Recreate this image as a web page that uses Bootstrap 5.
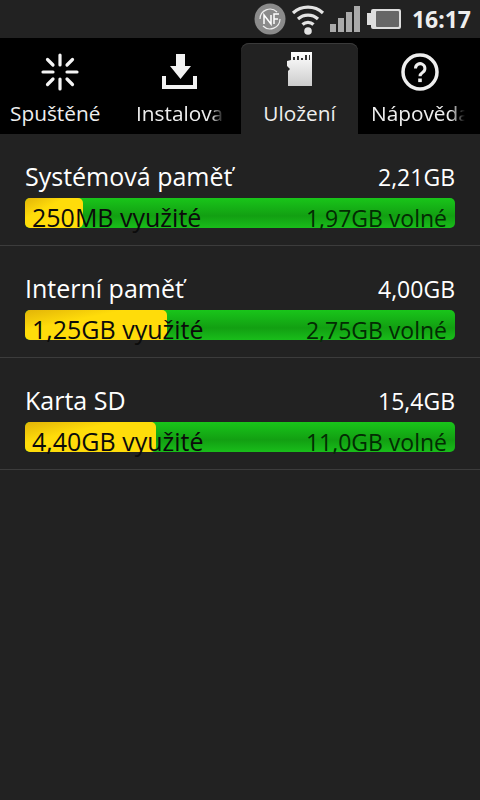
<!DOCTYPE html>
<html lang="cs">
<head>
    <meta charset="UTF-8">
    <meta name="viewport" content="width=device-width, initial-scale=1">
    <title>Úložiště</title>
    <link href="https://cdn.jsdelivr.net/npm/bootstrap@5.3.0/dist/css/bootstrap.min.css" rel="stylesheet">
    <script src="https://cdn.jsdelivr.net/npm/bootstrap@5.3.0/dist/js/bootstrap.bundle.min.js"></script>
    <style>
        html, body { height: 100%; }
        body { background: #222; color: #fff; font-family: "Open Sans", "Noto Sans", sans-serif; overflow: hidden; }
        .status-bar { height: 38px; background: #222; padding-right: 9px; gap: 5px; }
        .clock { font: bold 23px/38px "Noto Sans", sans-serif; color: #eee; margin-left: 5px; }
        .tab-bar { height: 96px; background: #000; }
        .tab-item { width: 120px; height: 96px; padding-top: 7px; overflow: hidden; }
        .tab-item.selected { background: #222; border-radius: 8px 8px 0 0; width: 117px; height: 91px; margin: 5px 2px 0 1px; padding-top: 0; box-shadow: inset 0 1px 0 #3a3a3a; }
        .tab-icon { height: 53px; }
        .selected .tab-icon { height: 55px; padding-bottom: 3px; }
        .tab-label { font-size: 20.8px; line-height: 28px; margin-top: 1px; white-space: nowrap; overflow: hidden; color: #eee; }
        .fade-end { -webkit-mask-image: linear-gradient(to right, #000 85%, transparent); mask-image: linear-gradient(to right, #000 85%, transparent); }
        .tab-a { padding-left: 10px; }
        .tab-b { margin-left: 16px; width: 88px; }
        .tab-c { text-align: center; }
        .tab-d { margin-left: 11px; width: 94px; }
        .storage-row { height: 112px; padding: 24px 25px 0; border-bottom: 1px solid #3c3c3c; }
        .storage-head { font-size: 23px; line-height: 36px; margin-bottom: 3px; }
        .name-text { font-size: 25px; }
        .used-bar { height: 30px; border-radius: 5px; position: relative; background: linear-gradient(#19c51a, #129f12 60%, #19bd1a); }
        .used-fill { position: absolute; left: 0; top: 0; bottom: 0; border-radius: 5px; background: linear-gradient(to bottom right, #e2b408, #ffdc0a 35%); }
        .used-text { position: absolute; inset: 0; padding: 0 8px 0 7px; font-size: 23px; line-height: 38px; color: #0b0b0b; white-space: nowrap; }
        .used-label { font-size: 25px; }
        .free-text { color: #032c03; }
    </style>
</head>
<body>
    <!-- status bar -->
    <div class="status-bar d-flex align-items-center justify-content-end">
        <svg width="32" height="32" viewBox="0 0 32 32">
            <circle cx="16" cy="16" r="15.500" fill="#8b8b8b"/>
            <path d="M6 16a10 10 0 0 1 17-7M26 16a10 10 0 0 1-17 7" fill="none" stroke="#eee" stroke-width="1.200"/>
            <path d="M10 21V12l7 9V12M20 21V11h5M20 16h4" fill="none" stroke="#fff" stroke-width="1.500"/>
        </svg>
        <svg width="34" height="32" viewBox="0 0 34 32">
            <path d="M2 10a22 22 0 0 1 30 0M7 16a15 15 0 0 1 20 0M11.500 21.500a8 8 0 0 1 11 0" fill="none" stroke="#e4e4e4" stroke-width="3.200"/>
            <circle cx="17" cy="28" r="3.800" fill="#e4e4e4"/>
        </svg>
        <svg width="31" height="28" viewBox="0 0 31 28">
            <rect x="0" y="19" width="6" height="8" fill="#aaa"/>
            <rect x="8" y="13" width="6" height="14" fill="#aaa"/>
            <rect x="16" y="7" width="6" height="20" fill="#aaa"/>
            <rect x="24" y="1" width="6" height="26" fill="#aaa"/>
        </svg>
        <svg width="36" height="26" viewBox="0 0 36 26">
            <path d="M5 7V5a2 2 0 0 1 2-2h26a2 2 0 0 1 2 2v16a2 2 0 0 1-2 2H7a2 2 0 0 1-2-2v-2H1V7z" fill="#ddd"/>
            <rect x="10" y="5" width="23" height="16" rx="1" fill="#666"/>
        </svg>
        <span class="clock">16:17</span>
    </div>

    <!-- tabs -->
    <div class="tab-bar d-flex">
        <div class="tab-item">
            <div class="tab-icon d-flex justify-content-center align-items-center">
                <svg width="38" height="38" viewBox="0 0 38 38" stroke="#f4f4f4" stroke-width="3.200" stroke-linecap="round">
                    <path d="M19 2v10M19 26v10M2 19h10M26 19h10M6.500 6.500l5.500 5.500M26 26l5.500 5.500M31.500 6.500L26 12M12 26l-5.500 5.500"/>
                </svg>
            </div>
            <div class="tab-label tab-a">Spuštěné</div>
        </div>
        <div class="tab-item">
            <div class="tab-icon d-flex justify-content-center align-items-center">
                <svg width="36" height="36" viewBox="0 0 36 36" fill="#f2f2f2">
                    <path d="M14 0h9v12h6L18.500 25 8 12h6z"/>
                    <path d="M0 22h4v9h27v-9h4v13H0z"/>
                </svg>
            </div>
            <div class="tab-label tab-b fade-end">Instalova</div>
        </div>
        <div class="tab-item selected">
            <div class="tab-icon d-flex justify-content-center align-items-center">
                <svg width="25" height="35" viewBox="0 0 25 35">
                    <defs><linearGradient id="sdFill" x1="0" y1="0" x2="0" y2="1"><stop offset="0" stop-color="#fff"/><stop offset="1" stop-color="#ccc"/></linearGradient></defs>
                    <path d="M4 0h21v34H1V19l2-2-3-3V9l4-1z" fill="url(#sdFill)"/>
                    <path d="M6 8V5h2v3zM10 8V4h2v4zM14 8V6h2v2zM18 8V3h2v5zM22 8V3h1v5z" fill="#333"/>
                </svg>
            </div>
            <div class="tab-label tab-c">Uložení</div>
        </div>
        <div class="tab-item">
            <div class="tab-icon d-flex justify-content-center align-items-center">
                <svg width="38" height="38" viewBox="0 0 38 38">
                    <circle cx="19" cy="19" r="17" fill="none" stroke="#eee" stroke-width="3.500"/>
                    <path d="M14.500 15.500a4.700 4.700 0 1 1 7.300 3.800c-1.900 1.300-2.800 2.200-2.800 4" fill="none" stroke="#eee" stroke-width="3"/>
                    <rect x="17.200" y="25.500" width="3.600" height="3.600" fill="#eee"/>
                </svg>
            </div>
            <div class="tab-label tab-d fade-end">Nápověda</div>
        </div>
    </div>

    <!-- storage rows -->
    <div class="storage-row">
        <div class="storage-head d-flex justify-content-between align-items-baseline"><span class="name-text">Systémová paměť</span><span>2,21GB</span></div>
        <div class="used-bar">
            <div class="used-fill" style="width: 58px"></div>
            <div class="used-text d-flex justify-content-between align-items-baseline"><span class="used-label">250MB využité</span><span class="free-text">1,97GB volné</span></div>
        </div>
    </div>
    <div class="storage-row">
        <div class="storage-head d-flex justify-content-between align-items-baseline"><span class="name-text">Interní paměť</span><span>4,00GB</span></div>
        <div class="used-bar">
            <div class="used-fill" style="width: 142px"></div>
            <div class="used-text d-flex justify-content-between align-items-baseline"><span class="used-label">1,25GB využité</span><span class="free-text">2,75GB volné</span></div>
        </div>
    </div>
    <div class="storage-row">
        <div class="storage-head d-flex justify-content-between align-items-baseline"><span class="name-text">Karta SD</span><span>15,4GB</span></div>
        <div class="used-bar">
            <div class="used-fill" style="width: 131px"></div>
            <div class="used-text d-flex justify-content-between align-items-baseline"><span class="used-label">4,40GB využité</span><span class="free-text">11,0GB volné</span></div>
        </div>
    </div>
</body>
</html>
